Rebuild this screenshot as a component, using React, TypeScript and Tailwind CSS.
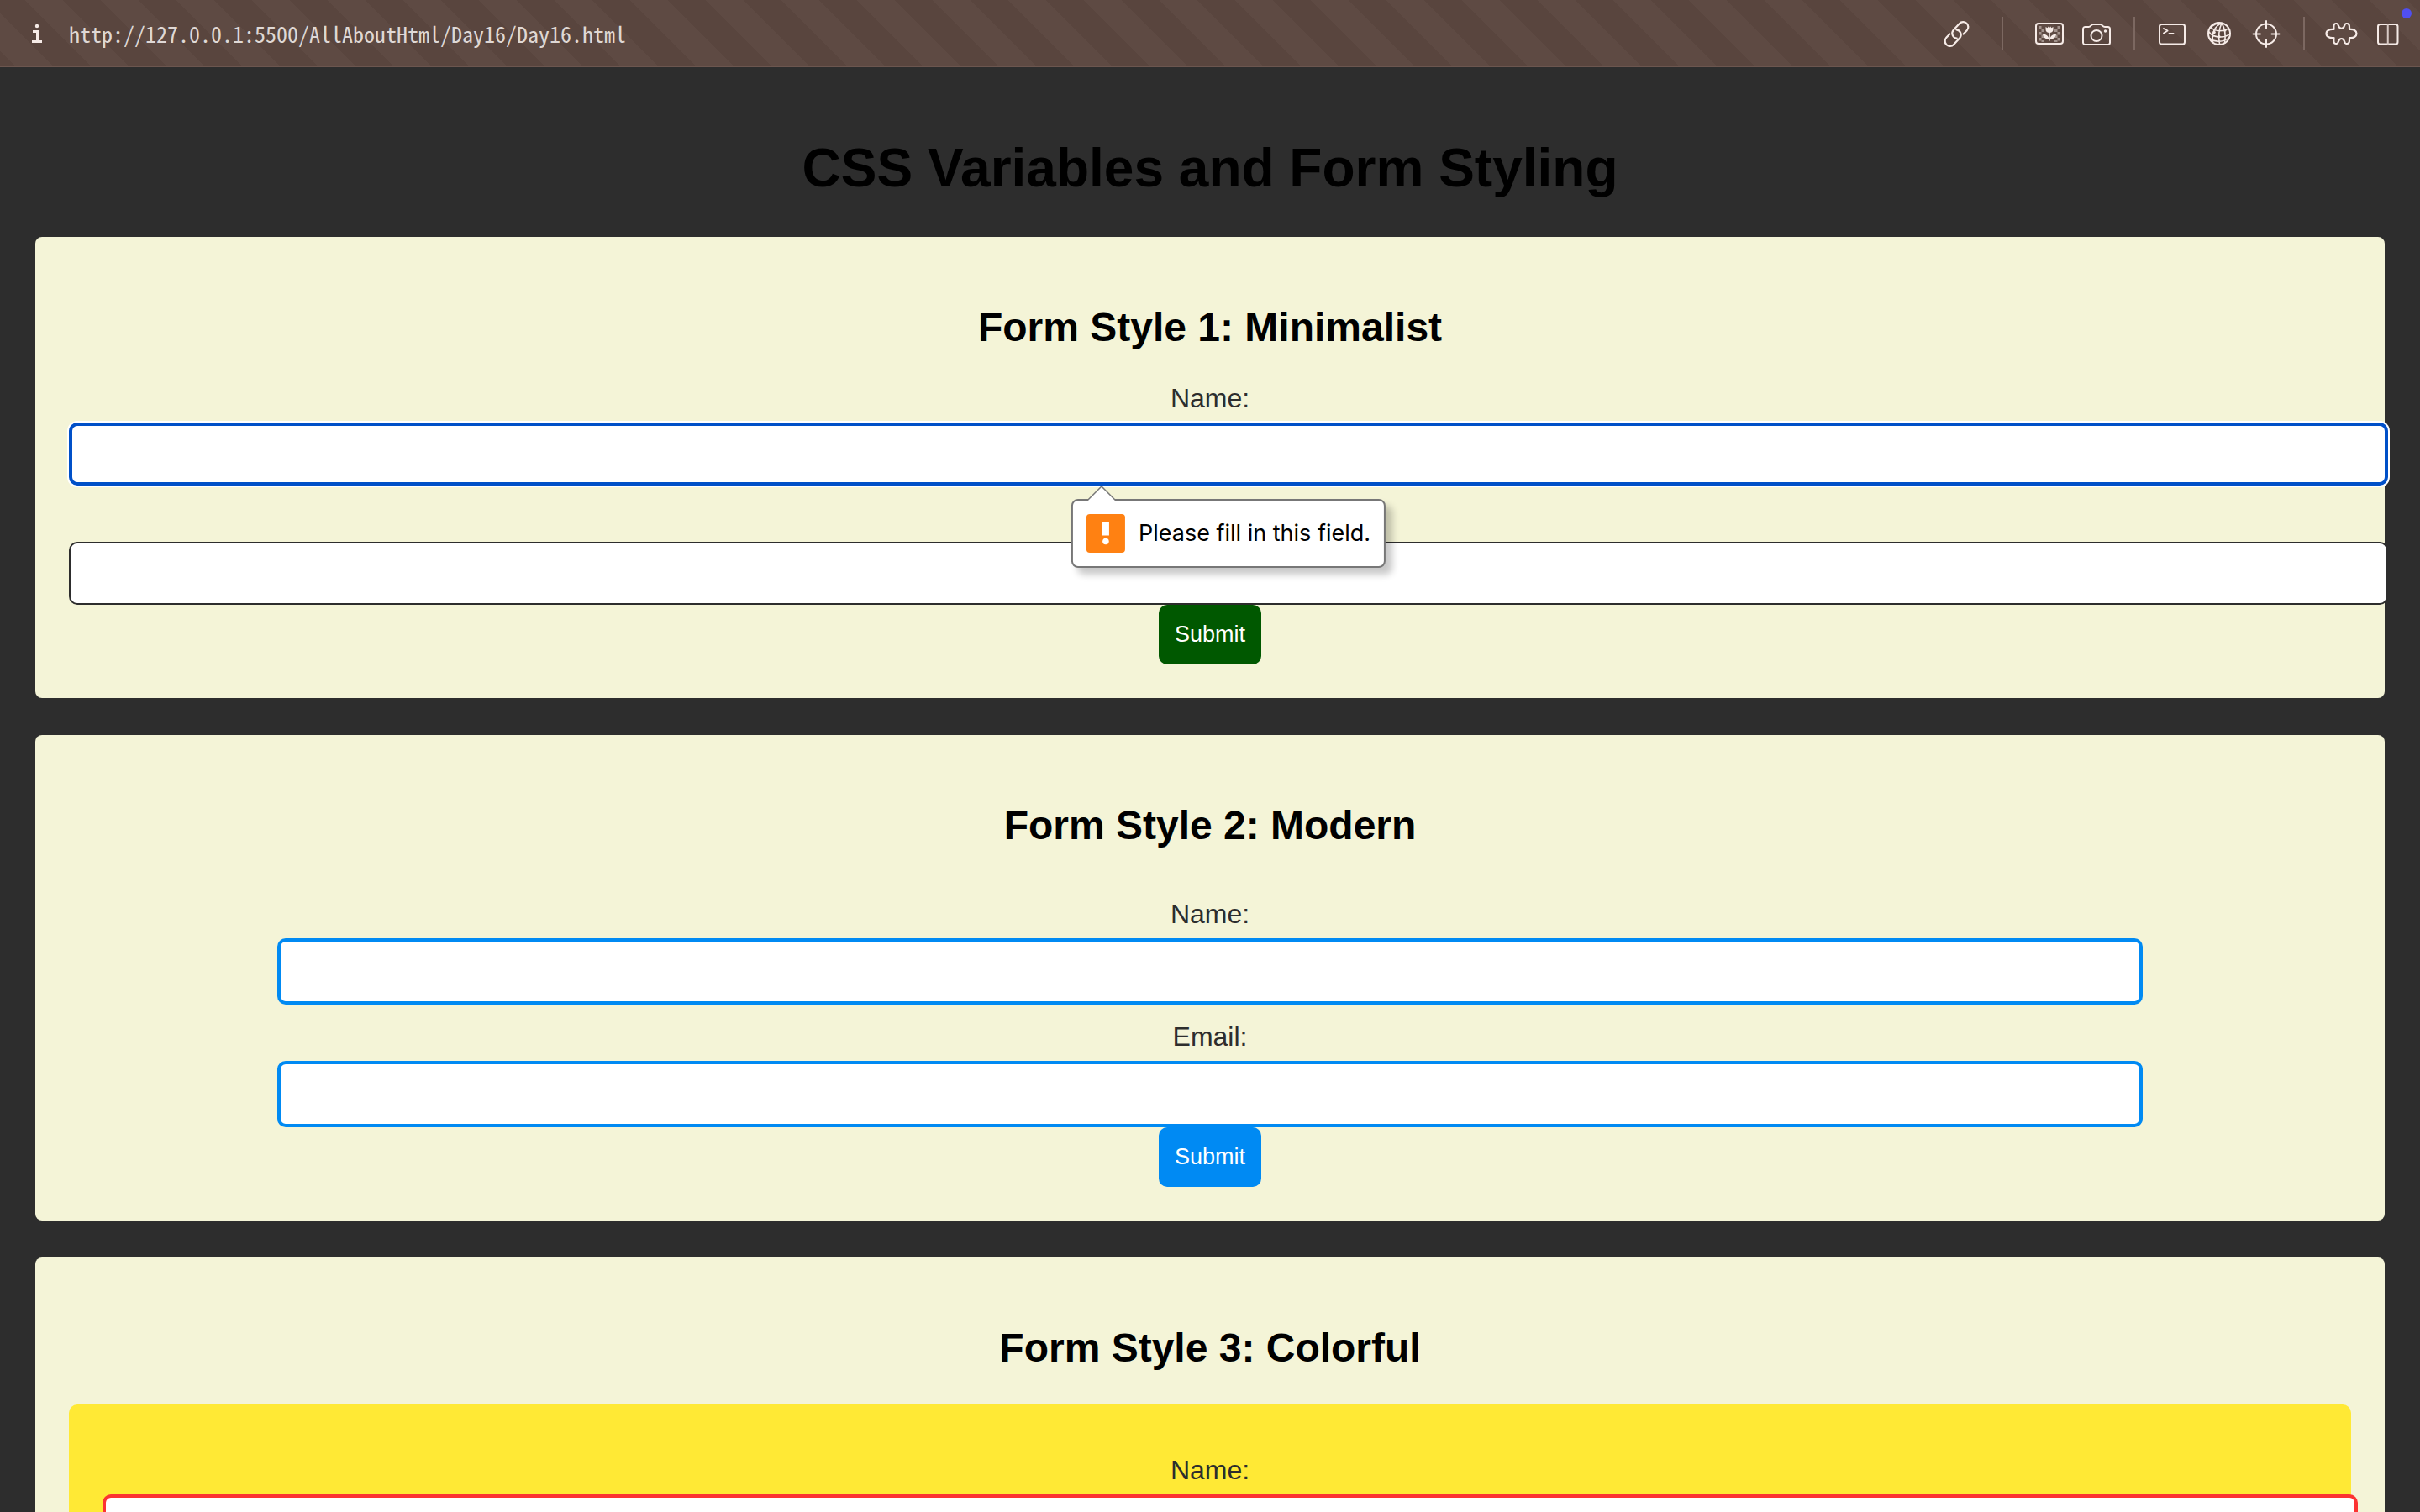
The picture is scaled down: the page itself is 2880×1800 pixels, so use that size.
import type { ReactNode } from "react";

type IconButtonProps = { label: string; children: ReactNode };

function IconButton({ label, children }: IconButtonProps) {
  return (
    <button type="button" aria-label={label} className="flex h-14 w-14 items-center justify-center">
      <svg
        viewBox="0 0 40 40"
        className="h-10 w-10"
        fill="none"
        stroke="#f6ebe7"
        strokeWidth="2"
        strokeLinecap="round"
        strokeLinejoin="round"
        aria-hidden="true"
      >
        {children}
      </svg>
    </button>
  );
}

function LinkIcon() {
  return (
    <g transform="translate(21.5 20.5) rotate(-47)" strokeWidth="2.200">
      <path d="M5.500 6 H11.500 A6 6 0 0 0 11.500 -6 H1 A6 6 0 0 0 -3.600 3.600" />
      <path d="M-5.500 -6 H-11.500 A6 6 0 0 0 -11.500 6 H-1 A6 6 0 0 0 3.600 -3.600" />
    </g>
  );
}

const checks: [number, number][] = [
  [7, 11], [7, 18], [7, 25], [10.5, 14.5], [10.5, 21.5], [10.5, 28],
  [29.5, 11], [29.5, 18], [29.5, 25], [26, 14.5], [26, 21.5], [26, 28],
];

function ImageIcon() {
  return (
    <>
      {checks.map(([x, y]) => (
        <rect key={`${x}-${y}`} x={x} y={y} width="3.5" height={y === 28 ? 2 : 3.5} fill="#a3938d" stroke="none" />
      ))}
      <rect x="4" y="8" width="32" height="24" rx="3" />
      <path
        d="M15.5 12 L17.6 13.2 L18.8 11.6 L20 13.2 L21.2 11.6 L22.4 13.2 L24.5 12 V15 C24.5 17.6 22.6 19 20 19 S15.5 17.6 15.5 15 Z"
        fill="#f6ebe7"
        stroke="none"
      />
      <path d="M20 18 V28" strokeWidth="1.6" />
      <path d="M12 20.5 C16 20.5 19 23 19.6 26.6 C15.5 26.8 12.4 24.6 12 20.5 Z M28 20.5 C24 20.5 21 23 20.4 26.6 C24.5 26.8 27.6 24.6 28 20.5 Z" fill="#f6ebe7" stroke="none" />
    </>
  );
}

function CameraIcon() {
  return (
    <>
      <path d="M7 12 H10.5 C13.5 12 13.5 9 16 9 H24.5 C27 9 27 12 30 12 H33.5 A2.5 2.5 0 0 1 36 14.500 V30.5 A2.5 2.5 0 0 1 33.500 33 H7 A2.500 2.500 0 0 1 4 30.500 V14.500 A2.500 2.500 0 0 1 7 12 Z" />
      <circle cx="20" cy="22.500" r="6.500" />
      <circle cx="30.500" cy="17" r="1.700" fill="#f6ebe7" stroke="none" />
    </>
  );
}

function TerminalIcon() {
  return (
    <>
      <rect x="5" y="9" width="30" height="23.500" rx="2.500" />
      <path d="M10 14 L14.500 16.500 L10 19.500 M16.500 20 H21.500" />
    </>
  );
}

function GlobeIcon() {
  return (
    <>
      <circle cx="20" cy="20" r="13" />
      <path
        strokeWidth="1.600"
        d="M23 7.500 C15 11 11 18 12.500 30.500 M23 7.500 C20 14 19 24 20.500 32.500 M23 7.500 C27 14 28 22 26.500 31 M23 7.500 C17 7.500 12.500 10 9.500 13 M10.500 13 C16 18 25 17.500 31 14 M7.500 17.500 C13 26 27 25.500 33 20 M8.500 25.500 C15 30.500 25 30.500 31.500 25"
      />
      <g fill="#f6ebe7" stroke="none">
        <circle cx="14" cy="18.500" r="1.800" />
        <circle cx="27" cy="16" r="1.600" />
        <circle cx="20" cy="23.500" r="1.600" />
      </g>
    </>
  );
}

function TargetIcon() {
  return (
    <>
      <circle cx="20" cy="20.500" r="12" />
      <path d="M20 5 V13.500 M20 27 V36 M4.500 20.500 H13 M26.500 20.500 H35.500" />
    </>
  );
}

function PuzzleIcon() {
  return (
    <path
      strokeWidth="2.200"
      d="M10.500 15 C10.500 12 9.500 8 13 8 H14 C16.500 8 15 13.800 19.500 13.800 S22.500 8 25 8 H26 C29.500 8 29 12 29 15 C34 14.500 37.500 16.500 37.500 20 S34 25.500 29 25 C29 28 29.500 32 26 32 H25 C22.500 32 24 26 19.500 26 S16.500 32 14 32 H13 C9.500 32 10.500 28 10.500 25 C5 25.500 1.500 23.500 1.500 20 S5 14.500 10.500 15 Z"
    />
  );
}

function PanelIcon() {
  return (
    <>
      <rect x="7" y="9" width="23.500" height="23.500" rx="2.500" />
      <path d="M18.750 9 V32.500" stroke="#d8cac5" />
    </>
  );
}

function Divider({ wide = false }: { wide?: boolean }) {
  return <div className={`h-10 w-0.5 bg-[#7c6861] ${wide ? "mx-[27px]" : "mx-4"}`} />;
}

function Toolbar() {
  return (
    <header className="relative flex h-20 items-center justify-between border-b-2 border-[#6c564f] bg-[linear-gradient(45deg,#59453e_25%,#5e4a43_25%,#5e4a43_50%,#59453e_50%,#59453e_75%,#5e4a43_75%)] bg-[length:90px_90px] bg-[position:-15px_0px] pt-0.5 pr-[9px] pl-4">
      <div className="flex items-center gap-[10px]">
        <button type="button" aria-label="Site information" className="flex h-14 w-14 items-center justify-center">
          <svg viewBox="0 0 14 24" className="h-6 w-3.5" fill="none" stroke="#f6ebe7" strokeWidth="3" aria-hidden="true">
            <circle cx="7" cy="3" r="2.200" fill="#f6ebe7" stroke="none" />
            <path d="M2 9.500 H7.500 V21 M1 21.500 H13" />
          </svg>
        </button>
        <a
          href="http://127.0.0.1:5500/AllAboutHtml/Day16/Day16.html"
          className="font-['Noto_Sans_Mono_CJK_SC','DejaVu_Sans_Mono',monospace] text-[26px] leading-7 text-[#dfd8d5]"
        >
          http://127.0.0.1:5500/AllAboutHtml/Day16/Day16.html
        </a>
      </div>
      <div className="flex items-center">
        <IconButton label="Copy link"><LinkIcon /></IconButton>
        <Divider wide />
        <IconButton label="Page images"><ImageIcon /></IconButton>
        <IconButton label="Capture page"><CameraIcon /></IconButton>
        <Divider />
        <IconButton label="Console"><TerminalIcon /></IconButton>
        <IconButton label="Network"><GlobeIcon /></IconButton>
        <IconButton label="Inspect element"><TargetIcon /></IconButton>
        <Divider />
        <IconButton label="Extensions"><PuzzleIcon /></IconButton>
        <IconButton label="Split view"><PanelIcon /></IconButton>
      </div>
      <span className="absolute top-2.5 right-2.5 h-3 w-3 rounded-full bg-[#504ff0]" />
    </header>
  );
}

function ValidationBubble() {
  return (
    <div
      role="alert"
      className="absolute top-[91px] left-[calc(50%+22px)] z-10 flex -translate-x-1/2 items-center gap-4 rounded-[8px] border-2 border-[#777777] bg-white px-4 py-4 whitespace-nowrap shadow-[8px_8px_8px_rgba(0,0,0,0.22)]"
    >
      <svg viewBox="0 0 36 19" className="absolute -top-[18px] left-4 h-[19px] w-9" aria-hidden="true">
        <path d="M1 18 L18 1 L35 18 V19 H1 Z" fill="#ffffff" />
        <path d="M1 18 L18 1 L35 18" fill="none" stroke="#777777" strokeWidth="1.500" />
      </svg>
      <svg viewBox="0 0 46 46" className="h-[46px] w-[46px]" aria-hidden="true">
        <rect width="46" height="46" rx="4" fill="#ff8112" />
        <rect x="19" y="10" width="8" height="15.500" fill="#ffffff" />
        <circle cx="23" cy="32.500" r="3.800" fill="#ffffff" />
      </svg>
      <p className="font-['Inter',sans-serif] text-[27px] leading-[46px] text-black">Please fill in this field.</p>
    </div>
  );
}

type FieldProps = {
  id: string;
  label: string;
  type?: string;
  labelClass?: string;
  rowClass?: string;
  inputClass: string;
  children?: ReactNode;
};

function Field({
  id,
  label,
  type = "text",
  labelClass = "mt-[21px]",
  rowClass = "justify-start",
  inputClass,
  children,
}: FieldProps) {
  return (
    <div className="flow-root">
      <label htmlFor={id} className={`mb-3 block text-[32px] leading-[34px] text-[#2d2d2d] ${labelClass}`}>
        {label}
      </label>
      <div className={`relative flex ${rowClass}`}>
        <input
          id={id}
          type={type}
          required
          className={`box-content h-[31px] shrink-0 rounded-[10px] bg-white text-[27px] outline-none ${inputClass}`}
        />
        {children}
      </div>
    </div>
  );
}

function SubmitButton({ color }: { color: string }) {
  return (
    <button type="submit" className={`mx-auto block rounded-[10px] px-[19px] py-5 text-[27px] leading-[31px] text-white ${color}`}>
      Submit
    </button>
  );
}

function FormCard({ title, children }: { title: string; children: ReactNode }) {
  return (
    <section className="mb-11 rounded-[8px] bg-[#f4f4d7] p-10">
      <h2 className="my-10 text-5xl leading-[55px] font-bold text-black">{title}</h2>
      <form onSubmit={(event) => event.preventDefault()}>{children}</form>
    </section>
  );
}

export default function App() {
  return (
    <div className="h-screen overflow-hidden bg-[#2d2d2d] font-['Liberation_Sans',Arial,sans-serif]">
      <Toolbar />
      <main className="px-[42px] pt-[41px] text-center">
        <h1 className="mt-[43px] mb-[45px] text-[64px] leading-[73px] font-bold text-black">
          CSS Variables and Form Styling
        </h1>

        <FormCard title="Form Style 1: Minimalist">
          <Field
            id="minimal-name"
            label="Name:"
            labelClass="mt-0"
            inputClass="w-full border-4 border-[#0050c8] p-[18px] ring-2 ring-white"
          >
            <ValidationBubble />
          </Field>
          <Field
            id="minimal-email"
            label="Email:"
            type="email"
            labelClass="mt-[21px] invisible"
            inputClass="w-full border-2 border-[#2d2d2d] p-5"
          />
          <SubmitButton color="bg-[#005800]" />
        </FormCard>

        <FormCard title="Form Style 2: Modern">
          <Field
            id="modern-name"
            label="Name:"
            rowClass="justify-center"
            inputClass="w-[80%] border-4 border-[#008af3] p-5"
          />
          <Field
            id="modern-email"
            label="Email:"
            type="email"
            rowClass="justify-center"
            inputClass="w-[80%] border-4 border-[#008af3] p-5"
          />
          <SubmitButton color="bg-[#008af3]" />
        </FormCard>

        <FormCard title="Form Style 3: Colorful">
          <div className="rounded-[10px] bg-[#ffe935] p-10">
            <Field id="colorful-name" label="Name:" inputClass="w-full border-4 border-[#fc3332] p-5" />
          </div>
        </FormCard>
      </main>
    </div>
  );
}
